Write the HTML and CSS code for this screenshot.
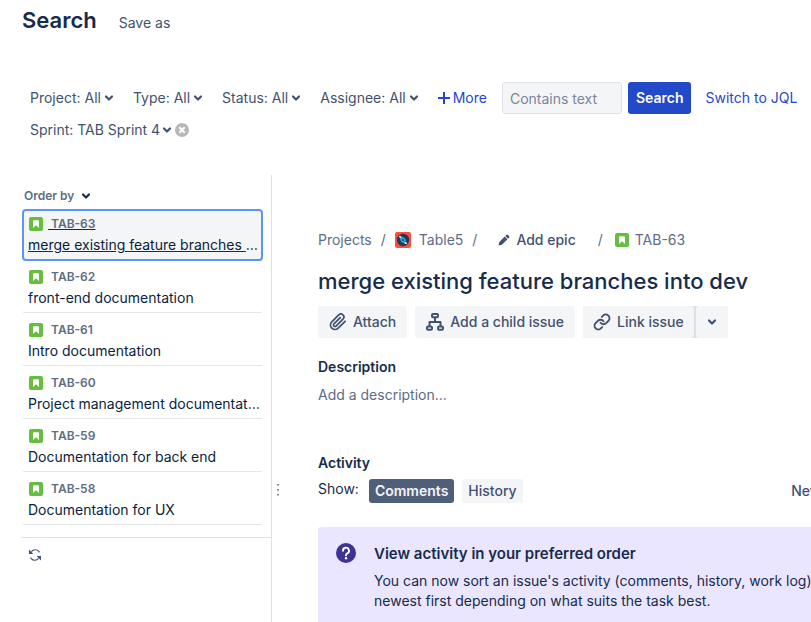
FILE: index.html
```
<!DOCTYPE html>
<html lang="en">
<head>
<meta charset="utf-8">
<title>Search</title>
<meta name="viewport" content="width=device-width, initial-scale=1">
<link rel="stylesheet" href="styles.css">
</head>
<body>
<svg class="defs" aria-hidden="true">
  <symbol id="chevron" viewBox="0 0 10 8"><path d="M2 2.5 L5 5.5 L8 2.5" fill="none" stroke="currentColor" stroke-width="2.2" stroke-linecap="round" stroke-linejoin="round"/></symbol>
  <symbol id="story" viewBox="0 0 14 14"><rect width="14" height="14" rx="2" fill="#67bd3f"/><path d="M4 4.2 Q4 3.2 5 3.2 H9 Q10 3.2 10 4.2 V11 L7 8.3 L4 11 Z" fill="#fff"/></symbol>
</svg>

<header class="page-header">
  <h1>Search</h1>
  <button class="save" type="button">Save as</button>
</header>

<form class="filters">
  <button class="filter" type="button">Project: All <svg class="chev"><use href="#chevron"/></svg></button>
  <button class="filter" type="button">Type: All <svg class="chev"><use href="#chevron"/></svg></button>
  <button class="filter" type="button">Status: All <svg class="chev"><use href="#chevron"/></svg></button>
  <button class="filter" type="button">Assignee: All <svg class="chev"><use href="#chevron"/></svg></button>
  <button class="filter more" type="button"><svg class="plus" viewBox="0 0 12 12"><path d="M6 0 V12 M0 6 H12" stroke="currentColor" stroke-width="2"/></svg>More</button>
  <input class="query" type="text" placeholder="Contains text" aria-label="Contains text">
  <button class="submit" type="button">Search</button>
  <a class="jql" href="#">Switch to JQL</a>
  <div class="sprint">
    <button class="filter" type="button">Sprint: TAB Sprint 4 <svg class="chev"><use href="#chevron"/></svg></button>
    <button class="remove" type="button" aria-label="Remove"><svg viewBox="0 0 14 14"><circle cx="7" cy="7" r="7" fill="#b8b8b8"/><path d="M4.3 4.3 L9.7 9.7 M9.7 4.3 L4.3 9.7" stroke="#fff" stroke-width="2"/></svg></button>
  </div>
</form>

<div class="split">
  <aside class="sidebar">
    <button class="order" type="button">Order by <svg class="chev"><use href="#chevron"/></svg></button>
    <ol class="issues">
      <li><a class="issue selected" href="#"><svg class="type"><use href="#story"/></svg><span class="key">&nbsp;TAB-63</span><span class="summary">merge existing feature branches into dev</span></a></li>
      <li><a class="issue" href="#"><svg class="type"><use href="#story"/></svg><span class="key">&nbsp;TAB-62</span><span class="summary">front-end documentation</span></a></li>
      <li><a class="issue" href="#"><svg class="type"><use href="#story"/></svg><span class="key">&nbsp;TAB-61</span><span class="summary">Intro documentation</span></a></li>
      <li><a class="issue" href="#"><svg class="type"><use href="#story"/></svg><span class="key">&nbsp;TAB-60</span><span class="summary">Project management documentation</span></a></li>
      <li><a class="issue" href="#"><svg class="type"><use href="#story"/></svg><span class="key">&nbsp;TAB-59</span><span class="summary">Documentation for back end</span></a></li>
      <li><a class="issue" href="#"><svg class="type"><use href="#story"/></svg><span class="key">&nbsp;TAB-58</span><span class="summary">Documentation for UX</span></a></li>
    </ol>
    <div class="list-footer">
      <button class="refresh" type="button" aria-label="Refresh"><svg viewBox="0 0 14 14" fill="none" stroke="currentColor" stroke-width="1.2"><path d="M3.4 3.6 A4.8 4.8 0 0 1 10.8 3.4 L11.4 4.4 M10.6 10.4 A4.8 4.8 0 0 1 3.2 10.6 L2.6 9.6"/><path d="M1 1.6 V6 H5.4 Z M13 12.4 V8 H8.6 Z" fill="currentColor" stroke="none"/></svg></button>
    </div>
  </aside>

  <div class="handle"><svg viewBox="0 0 2 12" fill="#7a869a"><rect width="2" height="1.5"/><rect y="5" width="2" height="1.5"/><rect y="10" width="2" height="1.5"/></svg></div>

  <main class="detail">
    <nav class="crumbs">
      <a href="#">Projects</a>
      <span class="sep">/</span>
      <a class="project" href="#"><svg class="avatar" viewBox="0 0 16 16"><rect width="16" height="16" rx="2" fill="#f9503a"/><circle cx="8" cy="8" r="6.2" fill="#253858"/><path d="M4.3 4.3 L6.5 5.7 M9.5 10.3 L11.7 11.7" stroke="#fff" stroke-width="1.6"/><ellipse cx="8" cy="8" rx="3.1" ry="2.3" transform="rotate(45 8 8)" fill="#2ca9e0"/><circle cx="8" cy="8" r="1" fill="#253858"/></svg>Table5</a>
      <span class="sep">/</span>
      <button class="epic" type="button"><svg viewBox="0 0 12 12" fill="currentColor"><path d="M0.5 11.6 L1.3 8 L6.7 2.6 L9.4 5.3 L4 10.7 Z M7.3 2 L8.6 0.8 Q9.2 0.3 9.8 0.8 L11.2 2.2 Q11.7 2.8 11.2 3.4 L10 4.7 Z"/></svg>Add epic</button>
      <span class="sep wide">/</span>
      <a class="current" href="#"><svg class="type"><use href="#story"/></svg>TAB-63</a>
    </nav>

    <h2 class="title">merge existing feature branches into dev</h2>

    <div class="actions">
      <button class="action" type="button"><svg viewBox="0 0 24 24" fill="none" stroke="currentColor" stroke-width="2.3" stroke-linecap="round" stroke-linejoin="round"><path d="M21.44 11.05l-9.19 9.19a6 6 0 0 1-8.49-8.49l9.19-9.19a4 4 0 0 1 5.66 5.66l-9.2 9.19a2 2 0 0 1-2.83-2.83l8.49-8.48"/></svg>Attach</button>
      <button class="action" type="button"><svg viewBox="0 0 18 18" fill="none" stroke="currentColor" stroke-width="2" stroke-linejoin="round"><rect x="6" y="1" width="6" height="3.2" rx="1"/><rect x="1" y="13.6" width="5" height="3.2" rx="1"/><rect x="12" y="13.6" width="5" height="3.2" rx="1"/><path d="M9 4.2 V9 M3.5 13.4 V9 H14.5 V13.4"/></svg>Add a child issue</button>
      <div class="action-group">
        <button class="action" type="button"><svg viewBox="0 0 24 24" fill="none" stroke="currentColor" stroke-width="2.6" stroke-linecap="round"><path d="M10 13a5 5 0 0 0 7.54.54l3-3a5 5 0 0 0-7.07-7.07l-1.72 1.71"/><path d="M14 11a5 5 0 0 0-7.54-.54l-3 3a5 5 0 0 0 7.07 7.07l1.71-1.71"/></svg>Link issue</button>
        <button class="action drop" type="button" aria-label="More link options"><svg class="chev"><use href="#chevron"/></svg></button>
      </div>
    </div>

    <h3>Description</h3>
    <p class="empty">Add a description...</p>

    <h3>Activity</h3>
    <div class="tabs">
      <span class="show">Show:</span>
      <button class="tab active" type="button">Comments</button>
      <button class="tab" type="button">History</button>
      <button class="sort" type="button">Newest first</button>
    </div>

    <section class="notice">
      <svg class="help" viewBox="0 0 20 20"><circle cx="10" cy="10" r="10" fill="#403294"/><path d="M7 7.8 A3 3 0 1 1 11.6 10.2 Q10 11 10 12.4" fill="none" stroke="#fff" stroke-width="1.9" stroke-linecap="round"/><circle cx="10" cy="15.3" r="1.2" fill="#fff"/></svg>
      <div>
        <h4>View activity in your preferred order</h4>
        <p>You can now sort an issue's activity (comments, history, work log) by<br>newest first depending on what suits the task best.</p>
      </div>
    </section>
  </main>
</div>
</body>
</html>
```
FILE: styles.css
```
* { box-sizing: border-box; }

body {
  margin: 0;
  min-height: 100vh;
  display: flex;
  flex-direction: column;
  overflow: hidden;
  background: #fff;
  color: #172b4d;
  font: 14px/20px Inter, "Liberation Sans", sans-serif;
}

h1, h2, h3, h4, p, ol { margin: 0; padding: 0; }
a { color: inherit; text-decoration: none; }
button { padding: 0; border: 0; background: none; color: inherit; font: inherit; white-space: nowrap; cursor: pointer; }
svg { flex: none; }

.defs { position: absolute; width: 0; height: 0; }
.chev { width: 10px; height: 8px; }
.type { width: 14px; height: 14px; }

.page-header { display: flex; align-items: center; gap: 22px; height: 40px; padding-left: 22px; }
.page-header h1 { font-size: 22px; line-height: 40px; font-weight: 600; }
.save { padding-top: 6px; color: #42526e; }

.filters { display: flex; flex-wrap: wrap; align-items: center; margin-top: 42px; padding-left: 20px; color: #42526e; }
.filter { display: flex; align-items: center; gap: 3px; height: 32px; padding: 0 9px 0 10px; }
.more { color: #1f48cc; }
.plus { width: 12px; height: 12px; }
.query { width: 120px; height: 32px; margin-left: 6px; padding: 0 7px; border: 1px solid #dfe1e6; border-radius: 3px; background: #f4f5f7; color: #172b4d; font: inherit; }
.query::placeholder { color: #7a869a; opacity: 1; }
.submit { height: 32px; margin-left: 6px; padding: 0 8px; border-radius: 3px; background: #2349cb; color: #fff; font-weight: 600; }
.jql { margin-left: 14px; color: #1f48cc; white-space: nowrap; }
.sprint { display: flex; align-items: center; flex-basis: 100%; }
.sprint .filter { gap: 2px; padding-right: 3px; }
.remove { display: flex; }
.remove svg { width: 14px; height: 14px; }

.split { display: flex; flex: 1; margin-top: 29px; padding-left: 22px; }

.sidebar { flex: 0 0 250px; padding-top: 11px; border-right: 1px solid #dfe1e6; }
.order { display: flex; align-items: center; gap: 7px; padding-left: 2px; color: #5e6c84; font-size: 12px; font-weight: 600; }
.order .chev { color: #172b4d; }
.issues { margin: 3px 8px 12px 0; list-style: none; }
.issue {
  display: grid;
  grid-template-columns: 14px 1fr;
  gap: 1px 6px;
  align-content: start;
  align-items: center;
  height: 51px;
  margin-bottom: 2px;
  padding: 5px 3px 0 6px;
  border-bottom: 1px solid #e4e6ea;
  border-radius: 3px;
}
.issue .type { margin-left: 1px; }
.key { color: #5e6c84; font-size: 12px; font-weight: 600; justify-self: start; }
.summary { grid-column: 1 / 3; overflow: hidden; text-overflow: ellipsis; white-space: nowrap; color: #091e42; }
.selected { height: 52px; margin-bottom: 1px; padding: 3px 0 0 4px; border: 2px solid #5a96f8; border-radius: 4px; background: #f4f5f7; text-decoration: underline; }
.list-footer { padding: 10px 6px; border-top: 1px solid #dfe1e6; }
.refresh { display: flex; color: #42526e; }
.refresh svg { width: 14px; height: 14px; }

.handle { display: flex; align-items: center; flex: 0 0 46px; padding: 170px 0 0 5px; }
.handle svg { width: 2px; height: 12px; }

.detail { flex: 1 0 600px; padding-top: 55px; }
.crumbs { display: flex; align-items: center; color: #5e6c84; white-space: nowrap; }
.crumbs a, .epic { display: flex; align-items: center; gap: 8px; }
.sep { padding: 0 9px; }
.wide { padding: 0 12px 0 22px; }
.avatar { width: 16px; height: 16px; }
.epic { gap: 6px; margin-left: 12px; color: #42526e; font-weight: 500; }
.epic svg { width: 12px; height: 12px; }
.crumbs .current { gap: 6px; }

.title { margin-top: 17px; font-size: 22px; line-height: 28px; font-weight: 500; white-space: nowrap; }

.actions { display: flex; gap: 8px; margin: 11px 0 19px; }
.action-group { display: flex; gap: 2px; background: #dcdfe6; border-radius: 3px; }
.action { display: flex; align-items: center; gap: 6px; height: 32px; padding: 0 11px; border-radius: 3px; background: #f4f5f7; color: #42526e; font-weight: 500; }
.action-group .action { padding: 0 10px; }
.action svg { width: 18px; height: 18px; }
.action .chev { width: 10px; height: 8px; }
.action-group .drop { padding: 0 11px; }

h3 { font-size: 14px; line-height: 20px; font-weight: 600; }
.empty { margin: 8px 0 48px; color: #5e6c84; }

.tabs { display: flex; align-items: center; gap: 8px; margin-top: 6px; white-space: nowrap; }
.show { padding: 0 2px 4px 0; }
.tab { height: 24px; padding: 0 6px; border-radius: 3px; background: #f4f5f7; color: #42526e; font-weight: 500; }
.active { background: #505f79; color: #f4f5f7; font-weight: 600; }
.sort { margin: 0 46px 0 auto; color: #42526e; font-weight: 500; }

.notice { display: flex; gap: 18px; margin-top: 24px; padding: 16px 18px 24px; border-radius: 3px; background: #eae6ff; white-space: nowrap; }
.help { width: 20px; height: 20px; }
.notice h4 { font-size: 15px; line-height: 22px; font-weight: 600; }
.notice p { margin-top: 6px; }
```
